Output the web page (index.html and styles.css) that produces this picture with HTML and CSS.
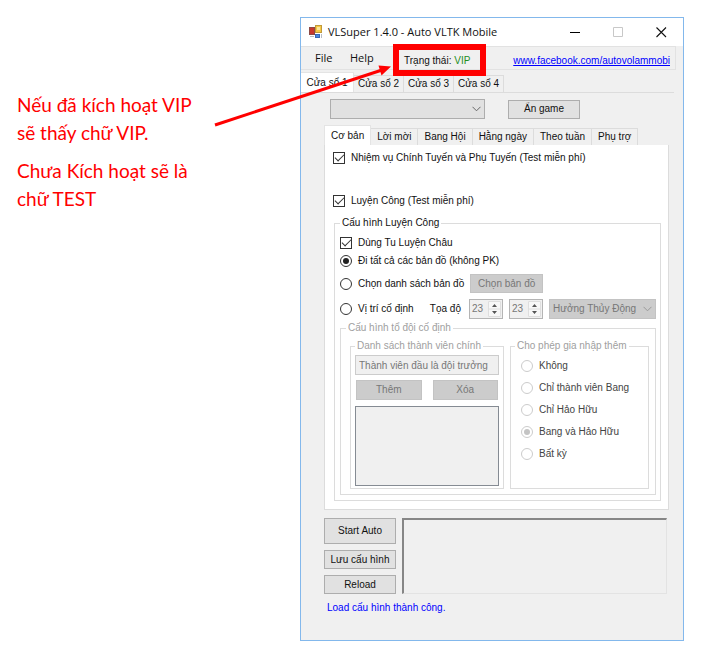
FILE: index.html
```html
<!DOCTYPE html>
<html lang="vi">
<head>
<meta charset="utf-8">
<meta name="viewport" content="width=device-width, initial-scale=1">
<title>VLSuper 1.4.0 - Auto VLTK Mobile</title>
<link rel="stylesheet" href="styles.css">
</head>
<body>
<main class="guide">
  <aside class="note">
    <p>Nếu đã kích hoạt VIP<br>sẽ thấy chữ VIP.</p>
    <p>Chưa Kích hoạt sẽ là<br>chữ TEST</p>
  </aside>

  <section class="window">
    <header class="titlebar">
      <svg class="app-icon" viewBox="0 0 14 14" width="14" height="14" aria-hidden="true">
        <rect x="0.5" y="2.500" width="5" height="7" fill="#c8372d" stroke="#8d4a45"/>
        <rect x="6.500" y="0.500" width="6" height="7" fill="#f6c844" stroke="#c09a3a"/>
        <rect x="8" y="2" width="3" height="3" fill="#fde79a"/>
        <rect x="6.500" y="9.500" width="4" height="3" fill="#4a86e0" stroke="#3568b8"/>
        <path d="M1 11.500h4M12.500 9v4" stroke="#b8bcc4" fill="none"/>
      </svg>
      <h1 class="title">VLSuper 1.4.0 - Auto VLTK Mobile</h1>
      <div class="caption">
        <button type="button" aria-label="Minimize"><svg width="11" height="11" viewBox="0 0 11 11"><path d="M0 5.5h10" stroke="#000" fill="none"/></svg></button>
        <button type="button" aria-label="Maximize" disabled><svg width="11" height="11" viewBox="0 0 11 11"><path d="M.5 .5h9v9h-9z" stroke="#c8c8c8" fill="none"/></svg></button>
        <button type="button" aria-label="Close"><svg width="11" height="11" viewBox="0 0 11 11"><path d="M.5 .5l9.5 9.5M10 .5L.5 10" stroke="#111" stroke-width="1.1" fill="none"/></svg></button>
      </div>
    </header>

    <nav class="menu">
      <button type="button" class="menu-item">File</button>
      <button type="button" class="menu-item">Help</button>
      <span class="status">Trạng thái: <b class="vip">VIP</b></span>
      <a class="site" href="#facebook">www.facebook.com/autovolammobi</a>
    </nav>

    <div class="tabs tabs-main" role="tablist">
      <button type="button" class="tab active" role="tab" aria-selected="true">Cửa sổ 1</button>
      <button type="button" class="tab" role="tab">Cửa sổ 2</button>
      <button type="button" class="tab" role="tab">Cửa sổ 3</button>
      <button type="button" class="tab" role="tab">Cửa sổ 4</button>
    </div>

    <div class="page">
      <div class="game-row">
        <span class="drop game-pick">
          <select aria-label="Game"><option></option></select>
          <svg class="chevron" width="9" height="6" viewBox="0 0 9 6"><path d="M.5 .8l4 4 4-4" fill="none" stroke="#666"/></svg>
        </span>
        <button type="button" class="btn game-hide">Ẩn game</button>
      </div>

      <div class="tabs tabs-inner" role="tablist">
        <button type="button" class="tab active" role="tab" aria-selected="true">Cơ bản</button>
        <button type="button" class="tab" role="tab">Lời mời</button>
        <button type="button" class="tab" role="tab">Bang Hội</button>
        <button type="button" class="tab" role="tab">Hằng ngày</button>
        <button type="button" class="tab" role="tab">Theo tuần</button>
        <button type="button" class="tab" role="tab">Phụ trợ</button>
      </div>

      <div class="panel">
        <label class="choice"><input type="checkbox" checked>Nhiệm vụ Chính Tuyến và Phụ Tuyến (Test miễn phí)</label>
        <label class="choice second"><input type="checkbox" checked>Luyện Công (Test miễn phí)</label>

        <fieldset class="group training">
          <legend>Cấu hình Luyện Công</legend>
          <label class="choice"><input type="checkbox" checked>Dùng Tu Luyện Châu</label>
          <label class="choice"><input type="radio" name="place" checked>Đi tất cả các bản đồ (không PK)</label>
          <div class="line">
            <label class="choice"><input type="radio" name="place">Chọn danh sách bản đồ</label>
            <button type="button" class="btn map-btn" disabled>Chọn bản đồ</button>
          </div>
          <div class="line fixed-spot">
            <label class="choice"><input type="radio" name="place">Vị trí cố định</label>
            <span class="coord-label" id="coord">Tọa độ</span>
            <span class="spin"><input type="number" value="23" aria-labelledby="coord" disabled><svg width="13" height="16" viewBox="0 0 13 16"><path d="M0 0h13v16H0z" fill="#f7f7f7"/><path d="M.5 .5h12v15H.5zM0 8h13" fill="none" stroke="#dedede"/><path d="M4 6l2.500-3L9 6zM4 10l2.500 3L9 10z" fill="#555"/></svg></span>
            <span class="spin"><input type="number" value="23" aria-labelledby="coord" disabled><svg width="13" height="16" viewBox="0 0 13 16"><path d="M0 0h13v16H0z" fill="#f7f7f7"/><path d="M.5 .5h12v15H.5zM0 8h13" fill="none" stroke="#dedede"/><path d="M4 6l2.500-3L9 6zM4 10l2.500 3L9 10z" fill="#555"/></svg></span>
            <span class="drop map-pick">
              <select aria-label="Bản đồ" disabled><option>Hưởng Thủy Động</option></select>
              <svg class="chevron" width="9" height="6" viewBox="0 0 9 6"><path d="M.5 .8l4 4 4-4" fill="none" stroke="#999"/></svg>
            </span>
          </div>

          <fieldset class="group team" disabled>
            <legend>Cấu hình tổ đội cố định</legend>
            <div class="team-cols">
              <fieldset class="group members">
                <legend>Danh sách thành viên chính</legend>
                <input class="member-name" type="text" aria-label="Thành viên" value="Thành viên đầu là đội trưởng">
                <div class="member-actions">
                  <button type="button" class="btn">Thêm</button>
                  <button type="button" class="btn">Xóa</button>
                </div>
                <select class="member-list" size="4" aria-label="Danh sách"></select>
              </fieldset>
              <fieldset class="group joins">
                <legend>Cho phép gia nhập thêm</legend>
                <label class="choice"><input type="radio" name="join">Không</label>
                <label class="choice"><input type="radio" name="join">Chỉ thành viên Bang</label>
                <label class="choice"><input type="radio" name="join">Chỉ Hảo Hữu</label>
                <label class="choice"><input type="radio" name="join" checked>Bang và Hảo Hữu</label>
                <label class="choice"><input type="radio" name="join">Bất kỳ</label>
              </fieldset>
            </div>
          </fieldset>
        </fieldset>
      </div>

      <div class="bottom">
        <div class="actions">
          <button type="button" class="btn start">Start Auto</button>
          <button type="button" class="btn">Lưu cấu hình</button>
          <button type="button" class="btn">Reload</button>
        </div>
        <textarea class="log" aria-label="Log" readonly></textarea>
      </div>
      <p class="message">Load cấu hình thành công.</p>
    </div>

    <span class="highlight"></span>
    <svg class="arrow" width="180" height="70" viewBox="0 0 180 70" aria-hidden="true">
      <path d="M1 65L168 10" stroke="#f00" stroke-width="3" fill="none"/>
      <path d="M177 6.500L164.500 5.500L167.500 15.500z" fill="#f00"/>
    </svg>
  </section>
</main>
</body>
</html>
```

FILE: styles.css
```css
* { box-sizing: border-box; }

body {
  margin: 0;
  background: #fff;
  color: #111;
  font: 10px/14px "Liberation Sans", Arial, sans-serif;
}

button, input, select, textarea { font: inherit; color: inherit; margin: 0; }
button { padding: 0; border: 0; background: none; }

.guide {
  display: grid;
  grid-template-columns: 283px minmax(0, 1fr);
  padding: 17px 28px 8px 17px;
}

/* Explanatory text */
.note {
  padding-top: 74px;
  color: #f00;
  font: 19px/28px Lato, "Noto Sans", sans-serif;
}
.note p { margin: 0 0 10px; }

/* Window frame */
.window {
  position: relative;
  border: 1px solid #83b8ec;
  background: #f0f0f0;
}

.titlebar {
  display: flex;
  align-items: center;
  height: 28px;
  padding: 0 16px 0 8px;
  background: #fff;
}
.title {
  flex: 1;
  margin: 0 0 0 5px;
  font: 11px/16px "Open Sans", "Noto Sans", sans-serif;
}
.caption { display: flex; gap: 32px; }
.caption button { display: flex; }

.menu {
  display: flex;
  height: 24px;
  margin-right: 7px;
  border: 1px solid #e2e2e2;
  border-left: 0;
}
.menu-item {
  width: 35px;
  padding-left: 14px;
  height: 22px;
  text-align: left;
  font: 11px/16px "Open Sans", "Noto Sans", sans-serif;
}
.menu-item + .menu-item { width: 68px; }
.status, .site { padding-top: 7px; white-space: nowrap; }
.vip { color: #1f8f1f; font-weight: normal; }
.site { margin-left: auto; padding-right: 5px; color: #00f; }

/* Tabs */
.tabs { display: flex; align-items: flex-end; }
.tab {
  height: 17px;
  border: 1px solid #dcdcdc;
  border-width: 1px 1px 0 0;
  white-space: nowrap;
}
.tab.active {
  height: 20px;
  border-color: #e4e4e4;
  background: #fff;
}
.tabs-main {
  margin: 2px 9px 0 0;
  border-bottom: 1px solid #dcdcdc;
}
.tabs-main .tab { width: 50px; }
.tabs-main .tab.active { width: 53px; }
.tabs-inner { margin-top: 6px; }
.tabs-inner .tab { padding: 0 6px; }
.tabs-inner .tab.active { border-left-width: 1px; }

.page { padding: 6px 14px 25px 23px; }

/* Buttons and drop-downs */
.btn {
  height: 19px;
  border: 1px solid #adadad;
  background: #e1e1e1;
  white-space: nowrap;
}
.btn:disabled { border-color: #c3c3c3; background: #ccc; color: #777; }

.drop { position: relative; display: block; }
.drop select {
  appearance: none;
  display: block;
  width: 100%;
  height: 20px;
  padding: 0 3px;
  border: 1px solid #adadad;
  border-radius: 0;
  background: #e1e1e1;
}
.drop select:disabled { border-color: #c3c3c3; background: #ccc; color: #777; opacity: 1; }
.chevron { position: absolute; right: 4px; top: 7px; pointer-events: none; }

.game-row { display: flex; align-items: center; gap: 23px; padding-left: 6px; }
.game-pick { width: 155px; }
.game-hide { width: 72px; }

/* Panel contents */
.panel {
  padding: 6px 7px 8px 8px;
  border: 1px solid #dcdcdc;
  border-top: 0;
  background: #fff;
}

.choice {
  display: flex;
  align-items: center;
  gap: 6px;
  height: 14px;
  white-space: nowrap;
}
.choice.second { margin-top: 29px; }
.choice input {
  appearance: none;
  display: grid;
  place-items: center;
  flex: none;
  width: 12px;
  height: 12px;
  border: 1px solid #333;
  background: #fff;
}
.choice input[type="radio"] { border-radius: 50%; }
.choice input[type="checkbox"]:checked::after {
  content: "";
  width: 8px;
  height: 4px;
  margin-bottom: 3px;
  border: solid #333;
  border-width: 0 0 1px 1px;
  transform: rotate(-45deg);
}
.choice input[type="radio"]:checked::after {
  content: "";
  width: 6px;
  height: 6px;
  border-radius: 50%;
  background: #222;
}
.choice input:disabled { border-color: #ccc; }
.choice input[type="radio"]:disabled::after { background: #c4c4c4; }

.group {
  min-width: 0;
  margin: 0;
  padding: 0;
  border: 1px solid #dcdcdc;
}
.group > legend { padding: 0 2px; height: 14px; white-space: nowrap; }

.training { margin: 8px 0 0 1px; padding: 6px 4px 5px 5px; }
.training > .choice + .choice { margin-top: 4px; }

.line { display: flex; align-items: center; gap: 6px; margin-top: 6px; }
.map-btn { width: 73px; }
.fixed-spot .coord-label { flex: 1; padding-right: 2px; text-align: right; white-space: nowrap; }
.spin { position: relative; flex: none; width: 34px; }
.spin input {
  appearance: textfield;
  display: block;
  width: 100%;
  height: 20px;
  padding: 0 0 2px 2px;
  border: 1px solid #b4b4b4;
  background: #f0f0f0;
  color: #777;
}
.spin svg { position: absolute; right: 2px; top: 2px; }
.map-pick { flex: none; width: 107px; }

.team { margin: 2px 0 0; padding: 4px 6px 5px 5px; }
.team > legend, .team .group > legend { color: #a0a0a0; }
.team-cols {
  display: grid;
  grid-template-columns: 154px minmax(0, 1fr);
  gap: 6px;
  margin-left: 4px;
}
.members { padding: 2px 4px 2px; }
.member-name {
  display: block;
  width: 100%;
  height: 20px;
  padding: 0 3px;
  border: 1px solid #ccc;
  background: #f0f0f0;
  color: #777;
}
.member-actions { display: grid; grid-template-columns: 1fr 1fr; gap: 11px; margin: 5px 1px 6px; }
.member-actions .btn { height: 20px; }
.member-list {
  appearance: none;
  display: block;
  width: 100%;
  height: 80px;
  border: 1px solid #858b93;
  border-radius: 0;
  background: #f0f0f0;
  opacity: 1;
}
.joins { padding: 6px 4px; }
.joins .choice { margin-left: 6px; color: #444; }
.joins .choice + .choice { margin-top: 8px; }

/* Bottom area */
.bottom {
  display: grid;
  grid-template-columns: 72px minmax(0, 1fr);
  gap: 6px;
  margin: 8px 2px 0 0;
}
.actions { display: grid; gap: 6px; }
.start { height: 26px; }
.log {
  display: block;
  width: 100%;
  height: 100%;
  resize: none;
  border: solid;
  border-width: 2px 1px 1px 2px;
  border-color: #868686 #e3e3e3 #e3e3e3 #868686;
  border-radius: 0;
  background: #f0f0f0;
}
.message { margin: 7px 0 0 3px; color: #00f; }

/* Callout drawn over the window */
.highlight {
  position: absolute;
  left: 92px;
  top: 26px;
  width: 93px;
  height: 32px;
  border: 6px solid #f00;
}
.arrow { position: absolute; left: -87px; top: 42px; }
```
